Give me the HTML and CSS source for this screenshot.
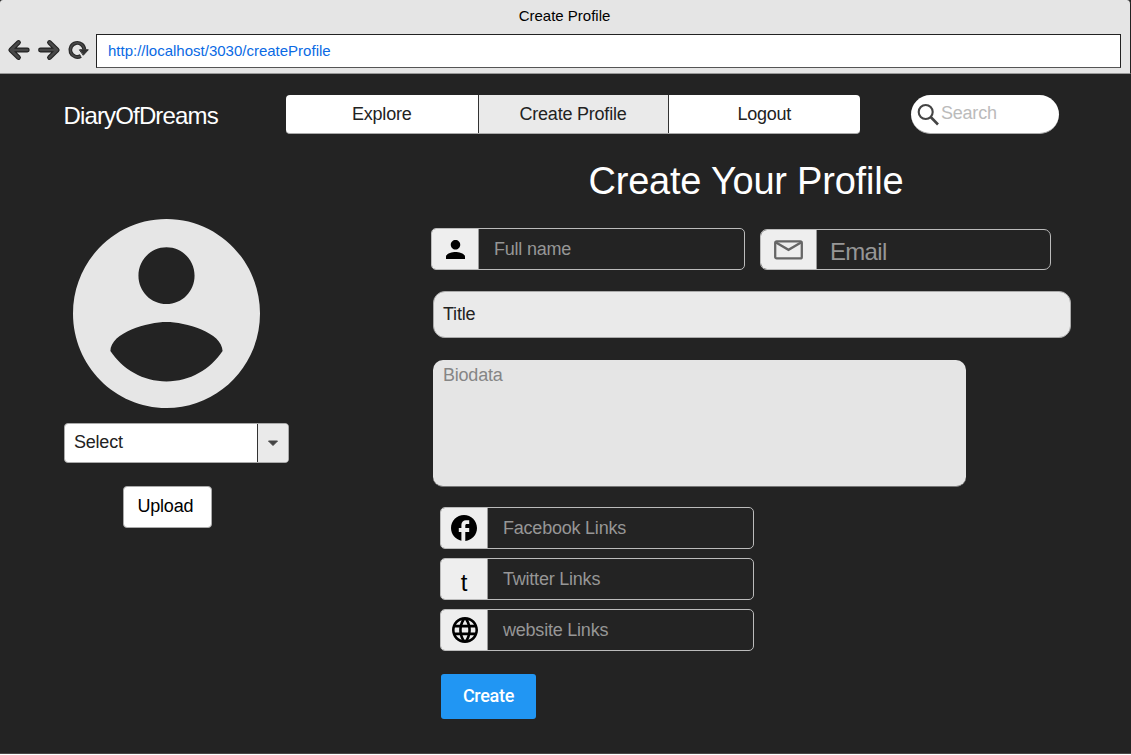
FILE: index.html
```html
<!DOCTYPE html>
<html lang="en">
<head>
<meta charset="utf-8">
<title>Create Profile</title>
<link rel="stylesheet" href="styles.css">
</head>
<body>
<div class="window">
  <header class="chrome">
    <div class="chrome-title">Create Profile</div>
    <div class="toolbar">
      <svg class="browser-icons" width="91" height="24" viewBox="0 0 91 24">
        <g fill="none" stroke-linecap="round" stroke-linejoin="round">
          <path d="M18.500 4.500L10.800 12L18.500 19.500M11.500 12H27.300M49.500 4.500L57.200 12L49.500 19.500M56.500 12H40.500" stroke="#222" stroke-width="4.800"/>
          <path d="M18.500 4.500L10.800 12L18.500 19.500M11.500 12H27.300M49.500 4.500L57.200 12L49.500 19.500M56.500 12H40.500" stroke="#484848" stroke-width="2.600"/>
          <path d="M80.800 18A7 7 0 1 1 84.300 11.500" stroke="#2a2a2a" stroke-width="3.900" stroke-linecap="butt"/>
          <path d="M80.800 18A7 7 0 1 1 84.300 11.500" stroke="#484848" stroke-width="1.600" stroke-linecap="butt"/>
          <path d="M79.800 11.800H88.300L83.500 17Z" fill="#333" stroke="#2a2a2a" stroke-width="1"/>
        </g>
      </svg>
      <div class="address">http://localhost/3030/createProfile</div>
    </div>
  </header>

  <div class="page">
    <nav class="topbar">
      <div class="brand">DiaryOfDreams</div>
      <div class="tabs">
        <a class="tab">Explore</a>
        <a class="tab tab-active">Create Profile</a>
        <a class="tab">Logout</a>
      </div>
      <div class="search">
        <svg width="24" height="24" viewBox="0 0 24 24" fill="none" stroke="#444"><circle cx="8.700" cy="9" r="7" stroke-width="2.100"/><path d="M13.700 14L21 21.500" stroke-width="2.600"/></svg>
        <span>Search</span>
      </div>
    </nav>

    <main class="content">
      <aside class="photo">
        <svg class="avatar" width="187" height="189" viewBox="2 2 20 20" preserveAspectRatio="none"><path fill="#e6e6e6" d="M12 2C6.480 2 2 6.480 2 12s4.480 10 10 10 10-4.480 10-10S17.520 2 12 2zm0 3c1.660 0 3 1.340 3 3s-1.340 3-3 3-3-1.340-3-3 1.340-3 3-3zm0 14.200c-2.500 0-4.710-1.280-6-3.220.030-1.990 4-3.080 6-3.080 1.990 0 5.970 1.090 6 3.080-1.290 1.940-3.500 3.220-6 3.220z"/></svg>
        <div class="select">
          <span class="select-value">Select</span>
          <span class="select-arrow"><svg width="12" height="7" viewBox="0 0 12 7"><path d="M1.500 1H10.500L6 5.500Z" fill="#444" stroke="#444" stroke-linejoin="round"/></svg></span>
        </div>
        <div class="upload">Upload</div>
      </aside>

      <section class="form">
        <h1>Create Your Profile</h1>
        <div class="row">
          <div class="field">
            <span class="addon"><svg class="person" width="19" height="19" viewBox="4 4 16 16"><path d="M12 12c2.210 0 4-1.790 4-4s-1.790-4-4-4-4 1.790-4 4 1.790 4 4 4zm0 2c-2.670 0-8 1.340-8 4v2h16v-2c0-2.660-5.330-4-8-4z"/></svg></span>
            <span class="hint">Full name</span>
          </div>
          <div class="field email">
            <span class="addon"><svg width="29" height="20" viewBox="0 0 29 20" fill="none" stroke="#666" stroke-width="2.300"><rect x="1.200" y="1.400" width="26.600" height="17" rx="1.500"/><path d="M2 2.500L14.500 9.800L27 2.500"/></svg></span>
            <span class="hint">Email</span>
          </div>
        </div>
        <div class="title-field">Title</div>
        <div class="bio">Biodata</div>
        <div class="links">
          <div class="field">
            <span class="addon"><svg width="26" height="26" viewBox="2 2 20 20"><path d="M22 12c0-5.520-4.480-10-10-10S2 6.480 2 12c0 4.840 3.440 8.870 8 9.800V15H8v-3h2V9.500C10 7.570 11.570 6 13.500 6H16v3h-2c-.550 0-1 .450-1 1v2h3v3h-3v6.950c5.050-.500 9-4.760 9-9.950z"/></svg></span>
            <span class="hint">Facebook Links</span>
          </div>
          <div class="field">
            <span class="addon letter">t</span>
            <span class="hint">Twitter Links</span>
          </div>
          <div class="field">
            <span class="addon"><svg class="globe" width="26" height="26" viewBox="2 2 20 20"><path d="M11.990 2C6.470 2 2 6.480 2 12s4.470 10 9.990 10C17.520 22 22 17.520 22 12S17.520 2 11.990 2zm6.930 6h-2.950c-.320-1.250-.780-2.450-1.380-3.560 1.840.630 3.370 1.910 4.330 3.560zM12 4.040c.830 1.200 1.480 2.530 1.910 3.960h-3.820c.430-1.430 1.080-2.760 1.910-3.960zM4.260 14C4.100 13.360 4 12.690 4 12s.100-1.360.260-2h3.380c-.080.660-.140 1.320-.140 2s.060 1.340.140 2H4.260zm.820 2h2.950c.320 1.250.780 2.450 1.380 3.560-1.840-.630-3.370-1.900-4.330-3.560zm2.950-8H5.080c.960-1.660 2.490-2.930 4.330-3.560C8.810 5.550 8.350 6.750 8.030 8zM12 19.960c-.830-1.200-1.480-2.530-1.910-3.960h3.820c-.430 1.430-1.080 2.760-1.910 3.960zM14.340 14H9.660c-.090-.660-.160-1.320-.160-2s.070-1.350.160-2h4.680c.090.650.160 1.320.160 2s-.070 1.340-.160 2zm.250 5.560c.600-1.110 1.060-2.310 1.380-3.560h2.950c-.960 1.650-2.490 2.930-4.330 3.560zM16.360 14c.080-.660.140-1.320.140-2s-.060-1.340-.140-2h3.380c.160.640.260 1.310.260 2s-.100 1.360-.260 2h-3.380z"/></svg></span>
            <span class="hint">website Links</span>
          </div>
        </div>
        <div class="create">Create</div>
      </section>
    </main>
  </div>
</div>
</body>
</html>
```
FILE: styles.css
```css
* { box-sizing: border-box; }
body {
  margin: 0;
  background: #232323;
  font: 18px/20px "Liberation Sans", Arial, sans-serif;
  letter-spacing: -0.22px;
  color: #222;
}
.window { height: 755px; overflow: hidden; border-bottom: 1px solid #fff; }
.chrome {
  height: 74px;
  background: #e5e5e5;
  border-right: 1px solid #222;
  border-bottom: 1px solid #999;
  border-radius: 3px 4px 0 0;
}
.chrome-title {
  height: 34px;
  padding-right: 1px;
  font-size: 15px;
  line-height: 32px;
  letter-spacing: 0;
  text-align: center;
  color: #000;
}
.toolbar { display: flex; gap: 5px; padding: 0 9px 0 0; }
.browser-icons { flex: none; margin-top: 4px; }
.address {
  flex: 1;
  height: 34px;
  padding-left: 11px;
  background: #fff;
  border: 1px solid #222;
  border-bottom-color: #555;
  font-size: 15px;
  line-height: 32px;
  letter-spacing: 0;
  color: #0a6ae4;
}
.page { height: 680px; border-bottom: 1px solid #4a4646; padding-top: 21px; }
.topbar { display: flex; height: 39px; padding-left: 63.5px; }
.brand {
  width: 222.5px;
  font-size: 24px;
  line-height: 42px;
  letter-spacing: -0.85px;
  color: #fff;
}
.tabs {
  display: flex;
  width: 574px;
  background: #fff;
  border-bottom: 1px solid #aaa;
  border-radius: 4px;
  overflow: hidden;
}
.tab { flex: 1; line-height: 39px; text-align: center; }
.tab-active { flex: 0 0 191px; background: #eaeaea; border: solid #333; border-width: 0 1px; }
.search {
  display: flex;
  align-items: center;
  width: 148px;
  margin-left: 51px;
  padding-left: 6px;
  background: #fff;
  border-bottom: 1px solid #aaa;
  border-radius: 20px;
  color: #bbb;
}
.search svg { margin-top: 1px; }
.search span { padding: 0 0 2px; }
.content { display: flex; }
.photo { width: 433px; padding: 85px 0 0 64px; }
.avatar { display: block; margin-left: 9px; }
.select {
  display: flex;
  width: 225px;
  height: 40px;
  margin-top: 15px;
  background: #fff;
  border: 1px solid #aaa;
  border-radius: 4px;
  overflow: hidden;
}
.select-value { flex: 1; padding-left: 9px; line-height: 37px; }
.select-arrow {
  display: flex;
  align-items: center;
  justify-content: center;
  width: 31px;
  background: #eaeaea;
  border-left: 1px solid #333;
}
.upload {
  width: 89px;
  height: 42px;
  margin: 23px 0 0 59px;
  background: #fff;
  border: 1px solid #aaa;
  border-radius: 4px;
  line-height: 38px;
  padding-left: 13.5px;
  color: #000;
}
.form { width: 640px; }
h1 {
  margin: 26px 0 0 155.5px;
  font-size: 38px;
  font-weight: 400;
  line-height: 42px;
  letter-spacing: -0.22px;
  color: #fff;
}
.row { display: flex; gap: 15px; margin: 26px 0 0 -2px; }
.field {
  display: flex;
  width: 314px;
  height: 42px;
  border: 1px solid #bbb;
  border-radius: 5px;
  overflow: hidden;
}
.addon {
  display: flex;
  flex: none;
  align-items: center;
  justify-content: center;
  width: 47px;
  background: #eee;
  border-right: 1px solid #999;
}
.hint { padding-left: 15px; line-height: 40px; color: #969696; }
.email { width: 291px; border-radius: 7px; margin-top: 1px; height: 41px; }
.email .addon { width: 56px; }
.email .hint { padding-left: 13px; font-size: 24px; line-height: 44px; letter-spacing: -0.7px; }
.title-field {
  height: 47px;
  width: 638px;
  margin-top: 21px;
  padding-left: 9px;
  background: #eaeaea;
  border: 1px solid #aaa;
  border-radius: 12px;
  line-height: 44px;
}
.bio {
  width: 533px;
  height: 127px;
  margin-top: 22px;
  padding: 5px 10px;
  background: #e5e5e5;
  border-bottom: 1px solid #777;
  border-radius: 10px;
  color: #858585;
}
.links { display: grid; gap: 9px; margin: 20px 0 0 7px; }
.globe { margin-left: 1px; }
.letter { padding-top: 8px; font-size: 24px; color: #000; }
.create {
  width: 95px;
  height: 45px;
  margin: 23px 0 0 8px;
  background: #2196f3;
  border-radius: 3px;
  font: 500 18px/44px Roboto, sans-serif;
  letter-spacing: -0.3px;
  text-align: center;
  color: #fff;
}
```
